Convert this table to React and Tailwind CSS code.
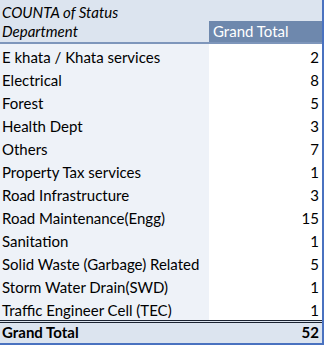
const rows = [
  ["E khata / Khata services", 2],
  ["Electrical", 8],
  ["Forest", 5],
  ["Health Dept", 3],
  ["Others", 7],
  ["Property Tax services", 1],
  ["Road Infrastructure", 3],
  ["Road Maintenance(Engg)", 15],
  ["Sanitation", 1],
  ["Solid Waste (Garbage) Related", 5],
  ["Storm Water Drain(SWD)", 1],
  ["Traffic Engineer Cell (TEC)", 1],
];

export default function App() {
  const total = rows.reduce((s, r) => s + r[1], 0);
  return (
    <div className="w-[326px] h-[347px] bg-white text-[15px] leading-[15px] text-black overflow-hidden" style={{ fontFamily: "Lato, 'Open Sans', sans-serif" }}>
      <div className="w-[324px] border-r-2 border-[#4a72c0] border-b-2 border-b-[#4a72c0]">
        {/* pivot header */}
        <div className="h-[21px] bg-[#dce4ef] flex items-end pb-[1px] pl-[2px] italic">COUNTA of Status</div>
        <div className="flex h-[23px] border-b-2 border-[#7e96bb]">
          <div className="w-[209px] bg-[#dce4ef] flex items-end pb-[3px] pl-[2px] italic">Department</div>
          <div className="flex-1 bg-[#6e88ad] text-white flex items-end pb-[3px] pl-[4px]">Grand Total</div>
        </div>

        {/* rows */}
        {rows.map(([name, n]) => (
          <div key={name} className="flex h-[23px]">
            <div className="w-[209px] bg-[#eef2f8] flex items-end pb-[2px] pl-[2px]">{name}</div>
            <div className="flex-1 bg-white flex items-end justify-end pb-[2px] pr-[3px]">{n}</div>
          </div>
        ))}

        {/* total */}
        <div className="border-t-[3px] border-double border-[#1b2331] h-[23px] bg-[#dce4ef] flex items-end justify-between pb-[3px] pl-[2px] pr-[3px] font-bold">
          <span>Grand Total</span>
          <span>{total}</span>
        </div>
      </div>
    </div>
  );
}
